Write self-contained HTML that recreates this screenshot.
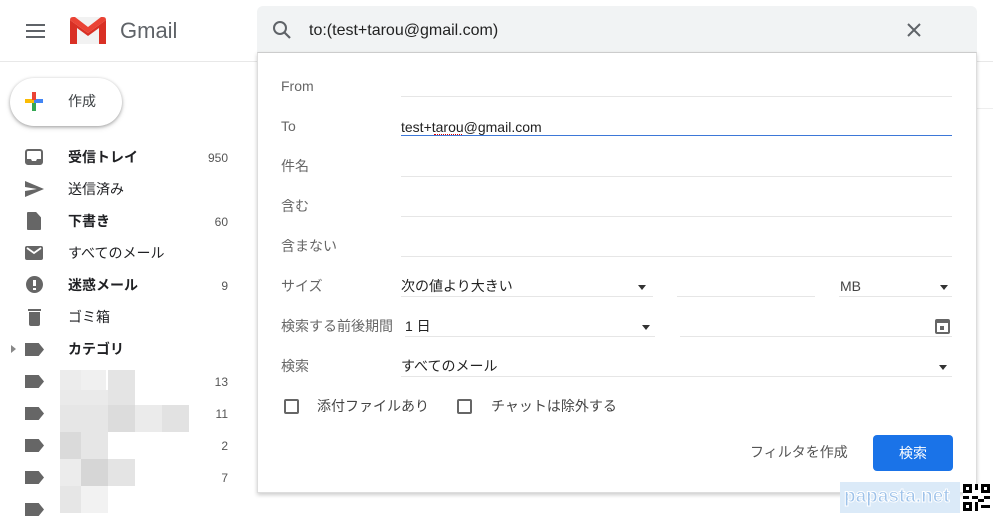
<!DOCTYPE html>
<html><head><meta charset="utf-8"><style>
*{margin:0;padding:0;box-sizing:border-box}
body{width:993px;height:513px;overflow:hidden;background:#fff;font-family:"Liberation Sans","Noto Sans CJK JP",sans-serif;position:relative;color:#222}
.a{position:absolute}
.nav{position:absolute;left:68px;font-size:14px;color:#202124;line-height:20px}
.b{font-weight:bold}
.cnt{position:absolute;font-size:12px;color:#555;line-height:20px;text-align:right;width:30px;left:198px}
.ic{position:absolute;left:25px}
.lbl{position:absolute;left:281px;font-size:14px;color:#666;line-height:20px}
.ln{position:absolute;height:1px;background:#e6e6e6}
.v{position:absolute;font-size:14px;color:#222;line-height:20px}
.tri{position:absolute;width:0;height:0;border-left:4px solid transparent;border-right:4px solid transparent;border-top:5px solid #333}
.cb{position:absolute;width:15px;height:15px;border:2px solid #666;border-radius:2px}
.tag{position:absolute;left:25px;width:19px;height:13px;background:#666;clip-path:polygon(0 0,72% 0,100% 50%,72% 100%,0 100%)}
.px{position:absolute;width:25px;height:25px}
</style></head><body>
<div class="a" style="left:26px;top:24px;width:19px;height:2px;background:#5f6368;box-shadow:0 6px 0 #5f6368,0 12px 0 #5f6368"></div>
<svg class="a" style="left:70px;top:17px" width="36" height="27" viewBox="0 0 36 27">
<rect x="0" y="0" width="36" height="27" rx="2" fill="#f2f2f2"/>
<path d="M0 3 L18 16 L36 3 L36 27 L29 27 L29 11 L18 19 L7 11 L7 27 L0 27Z" fill="#d93025"/>
<path d="M0 3 Q0 0 3 0 L5 0 L18 10 L31 0 L33 0 Q36 0 36 3 L18 16Z" fill="#ea4335"/>
</svg>
<div class="a" style="left:120px;top:17px;font-size:22px;color:#5f6368;line-height:28px">Gmail</div>
<div class="a" style="left:0;top:61px;width:993px;height:1px;background:#e8e8e8"></div>
<div class="a" style="left:977px;top:108px;width:16px;height:1px;background:#eee"></div>
<div class="a" style="left:10px;top:78px;width:112px;height:48px;border-radius:24px;background:#fff;box-shadow:0 1px 3px rgba(0,0,0,.3),0 2px 6px rgba(0,0,0,.12)"></div>
<div class="a" style="left:25px;top:99px;width:18px;height:4px;background:linear-gradient(90deg,#fbbc04 50%,#4285f4 50%)"></div>
<div class="a" style="left:32px;top:92px;width:4px;height:8px;background:#ea4335"></div>
<div class="a" style="left:32px;top:103px;width:4px;height:8px;background:#34a853"></div>
<div class="a" style="left:68px;top:91px;font-size:14px;color:#3c4043;line-height:20px">作成</div>
<svg class="a" style="left:25px;top:149px" width="18" height="16"><rect x="1" y="1" width="16" height="14" rx="2" stroke="#666" stroke-width="2" fill="none"/><path d="M1 10 H6 L7 12 H11 L12 10 H17 V15 H1Z" fill="#666"/></svg>
<div class="nav b" style="top:147px">受信トレイ</div><div class="cnt" style="top:148px">950</div>
<svg class="a" style="left:25px;top:181px" width="19" height="16"><path d="M0 0 L19 8 L0 16 L0 10 L12 8 L0 6Z" fill="#666"/></svg>
<div class="nav" style="top:179px">送信済み</div>
<div class="ic" style="left:27px;top:212px;width:14px;height:18px;background:#666;clip-path:polygon(0 0,65% 0,100% 30%,100% 100%,0 100%);border-radius:1px"></div>
<div class="nav b" style="top:211px">下書き</div><div class="cnt" style="top:212px">60</div>
<div class="ic" style="top:246px;width:18px;height:14px;background:#666;border-radius:2px"></div>
<svg class="a" style="left:25px;top:246px" width="18" height="14"><path d="M2 2 L9 7 L16 2" stroke="#fff" stroke-width="1.8" fill="none"/></svg>
<div class="nav" style="top:243px">すべてのメール</div>
<div class="ic" style="left:26px;top:276px;width:17px;height:17px;border-radius:50%;background:#666"></div>
<div class="a" style="left:33px;top:280px;width:3px;height:6px;background:#fff"></div>
<div class="a" style="left:33px;top:288px;width:3px;height:2px;background:#fff"></div>
<div class="nav b" style="top:275px">迷惑メール</div><div class="cnt" style="top:276px">9</div>
<div class="ic" style="left:28px;top:309px;width:13px;height:2px;background:#666"></div>
<div class="ic" style="left:29px;top:312px;width:11px;height:14px;background:#666;border-radius:0 0 2px 2px"></div>
<div class="nav" style="top:307px">ゴミ箱</div>
<div class="a" style="left:11px;top:345px;width:0;height:0;border-top:4px solid transparent;border-bottom:4px solid transparent;border-left:5px solid #888"></div>
<div class="tag" style="top:343px"></div>
<div class="nav b" style="top:339px">カテゴリ</div>
<div class="tag" style="top:375px"></div><div class="cnt" style="top:372px">13</div>
<div class="tag" style="top:407px"></div><div class="cnt" style="top:404px">11</div>
<div class="tag" style="top:439px"></div><div class="cnt" style="top:436px">2</div>
<div class="tag" style="top:471px"></div><div class="cnt" style="top:468px">7</div>
<div class="tag" style="top:503px"></div>
<div class="px" style="left:60px;top:370px;background:#ececec;height:20px"></div><div class="px" style="left:81px;top:370px;background:#f0f0f0;height:20px"></div><div class="px" style="left:108px;top:370px;background:#e4e4e4;width:27px;height:35px"></div>
<div class="px" style="left:60px;top:390px;background:#eaeaea;width:48px;height:15px"></div>
<div class="px" style="left:60px;top:405px;background:#e6e6e6;width:48px;height:27px"></div><div class="px" style="left:108px;top:405px;background:#dcdcdc;width:27px;height:27px"></div><div class="px" style="left:135px;top:405px;background:#ebebeb;width:27px;height:27px"></div><div class="px" style="left:162px;top:405px;background:#e2e2e2;width:27px;height:27px"></div>
<div class="px" style="left:60px;top:432px;background:#dadada;width:21px;height:27px"></div><div class="px" style="left:81px;top:432px;background:#e6e6e6;width:27px;height:27px"></div>
<div class="px" style="left:60px;top:459px;background:#ececec;width:21px;height:27px"></div><div class="px" style="left:81px;top:459px;background:#d6d6d6;width:27px;height:27px"></div><div class="px" style="left:108px;top:459px;background:#e4e4e4;width:27px;height:27px"></div>
<div class="px" style="left:60px;top:486px;background:#e6e6e6;width:21px;height:27px"></div><div class="px" style="left:81px;top:486px;background:#f2f2f2;width:27px;height:27px"></div>
<div class="a" style="left:257px;top:6px;width:720px;height:47px;background:#f1f3f4;border-radius:6px 6px 0 0"></div>
<svg class="a" style="left:272px;top:20px" width="20" height="20"><circle cx="8" cy="8" r="6" stroke="#5f6368" stroke-width="2" fill="none"/><path d="M12.5 12.5 L18 18" stroke="#5f6368" stroke-width="2.2"/></svg>
<div class="a" style="left:309px;top:20px;font-size:16px;color:#222;line-height:22px">to:(test+tarou@gmail.com)</div>
<svg class="a" style="left:906px;top:22px" width="16" height="16"><path d="M2 2 L14 14 M14 2 L2 14" stroke="#5f6368" stroke-width="2"/></svg>
<div class="a" style="left:257px;top:52px;width:720px;height:441px;background:#fff;border:1px solid #ddd;border-top:1px solid #ccc;box-shadow:0 2px 4px rgba(0,0,0,.2)"></div>
<div class="lbl" style="top:76px">From</div><div class="ln" style="left:401px;top:96px;width:551px"></div>
<div class="lbl" style="top:116px">To</div><div class="v" style="left:401px;top:117px">test+tarou@gmail.com</div><div class="ln" style="left:401px;top:135px;width:551px;background:#3d78d8"></div>
<div class="a" style="left:434px;top:133px;width:28px;height:2px;border-bottom:1px dotted #d00"></div>
<div class="lbl" style="top:156px">件名</div><div class="ln" style="left:401px;top:176px;width:551px"></div>
<div class="lbl" style="top:196px">含む</div><div class="ln" style="left:401px;top:216px;width:551px"></div>
<div class="lbl" style="top:236px">含まない</div><div class="ln" style="left:401px;top:256px;width:551px"></div>
<div class="lbl" style="top:276px">サイズ</div>
<div class="v" style="left:401px;top:276px">次の値より大きい</div><div class="tri" style="left:638px;top:285px"></div><div class="ln" style="left:401px;top:296px;width:252px"></div>
<div class="ln" style="left:677px;top:296px;width:138px"></div>
<div class="v" style="left:840px;top:276px;color:#444">MB</div><div class="tri" style="left:940px;top:285px"></div><div class="ln" style="left:839px;top:296px;width:113px"></div>
<div class="lbl" style="top:316px">検索する前後期間</div>
<div class="v" style="left:405px;top:316px">1 日</div><div class="tri" style="left:642px;top:325px"></div><div class="ln" style="left:405px;top:336px;width:250px"></div>
<div class="ln" style="left:680px;top:336px;width:272px"></div>
<div class="a" style="left:935px;top:319px;width:15px;height:15px;border:2px solid #666;border-top-width:4px;border-radius:2px"></div>
<div class="a" style="left:940px;top:326px;width:4px;height:4px;background:#666"></div>
<div class="lbl" style="top:356px">検索</div>
<div class="v" style="left:401px;top:356px">すべてのメール</div><div class="tri" style="left:939px;top:365px"></div><div class="ln" style="left:401px;top:376px;width:551px"></div>
<div class="cb" style="left:284px;top:399px"></div><div class="v" style="left:317px;top:396px;color:#444">添付ファイルあり</div>
<div class="cb" style="left:457px;top:399px"></div><div class="v" style="left:491px;top:396px;color:#444">チャットは除外する</div>
<div class="v" style="left:750px;top:442px;color:#555">フィルタを作成</div>
<div class="a" style="left:873px;top:435px;width:80px;height:36px;background:#1a73e8;border-radius:4px;color:#fff;font-size:14px;line-height:36px;text-align:center">検索</div>
<div class="a" style="left:840px;top:482px;width:120px;height:31px;background:#dbeaf8"></div>
<div class="a" style="left:844px;top:484px;font-size:19px;font-weight:bold;color:#9fc3ea;line-height:26px;-webkit-text-stroke:1px #fff;letter-spacing:0">papasta.net</div>
<svg class="a" style="left:963px;top:484px" width="27" height="27" viewBox="0 0 9 9"><rect width="9" height="9" fill="#fff"/><path d="M0 0h3v3h-3zM6 0h3v3h-3zM0 6h3v3h-3z" fill="#000"/><path d="M1 1h1v1h-1zM7 1h1v1h-1zM1 7h1v1h-1z" fill="#fff"/><path d="M4 0h1v2h-1zM3 4h2v1h-2zM5 5h2v1h-2zM6 7h3v1h-3zM4 6h1v3h-1zM7 4h2v1h-2zM0 4h2v1h-2z" fill="#000"/></svg>
</body></html>
